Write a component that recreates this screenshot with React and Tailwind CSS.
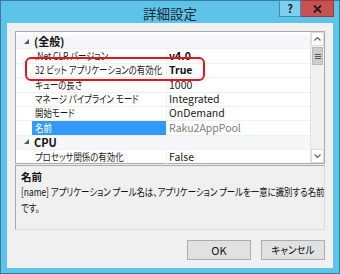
import React from 'react';

const font = { fontFamily: '"Noto Sans CJK JP", "Noto Sans", sans-serif', fontFeatureSettings: '"palt"' };

const rows = [
  { cat: true, name: '(全般)' },
  { name: '.Net CLR バージョン', value: 'v4.0', bold: true },
  { name: '32 ビット アプリケーションの有効化', value: 'True', bold: true },
  { name: 'キューの長さ', value: '1000' },
  { name: 'マネージ パイプライン モード', value: 'Integrated' },
  { name: '開始モード', value: 'OnDemand' },
  { name: '名前', value: 'Raku2AppPool', selected: true, readonly: true },
  { cat: true, name: 'CPU' },
  { name: 'プロセッサ関係の有効化', value: 'False' },
];

const Row = ({ row }) => {
  if (row.cat) {
    return (
      <div className="h-[14.4px] shrink-0 flex items-center bg-[#f5f7fa] border-b border-[#eef0f4]">
        <div className="w-[18px] flex justify-center pl-[4px]">
          <svg width="6" height="6" viewBox="0 0 6 6"><path d="M5 0 L5 5 L0 5 Z" fill="#595959" /></svg>
        </div>
        <span className="text-[11px] font-bold text-[#111] leading-none">{row.name}</span>
      </div>
    );
  }
  return (
    <div className="h-[14.4px] shrink-0 flex items-center border-b border-[#f0f0f0]">
      <div className={`w-[134px] shrink-0 h-full ml-[16px] flex items-center pl-[3px] ${row.selected ? 'bg-[#3399ff] text-white' : 'text-[#1a1a1a]'}`}>
        <span className="text-[10.5px] leading-none whitespace-nowrap scale-x-[0.8] origin-left">{row.name}</span>
      </div>
      <div className="flex-1 h-full flex items-center pl-[2px] border-l border-[#f0f0f0]">
        <span className={`text-[10.5px] leading-none ${row.bold ? 'font-bold text-[#111]' : row.readonly ? 'text-[#7a7a7a]' : 'text-[#1a1a1a]'}`}>{row.value}</span>
      </div>
    </div>
  );
};

export default function App() {
  return (
    <div className="w-[340px] h-[274px] bg-[#5ec3e9] border border-[#3a7c9c] flex flex-col" style={font}>
      {/* title bar */}
      <div className="h-[22px] shrink-0 relative flex items-center justify-center">
        <span className="text-[13.5px] text-[#1b2a33] mt-[2px]">詳細設定</span>
        <div className="absolute top-[-1px] right-[5px] flex">
          <div className="w-[22px] h-[17px] bg-[#7fd0ef] border border-[#3f8fb3] flex items-center justify-center text-[11px] font-bold text-[#1a1a1a]">?</div>
          <div className="w-[33px] h-[17px] bg-[#c75050] border border-[#9e3a3a] border-l-0 flex items-center justify-center">
            <svg width="9" height="8" viewBox="0 0 9 8"><path d="M1 0.5 L8 7.5 M8 0.5 L1 7.5" stroke="#1e1e1e" strokeWidth="1.8" /></svg>
          </div>
        </div>
      </div>

      {/* client */}
      <div className="flex-1 mx-[6px] mb-[5px] bg-[#f0f0f0] px-[8px] pt-[8px] flex flex-col">
        <div className="h-[133px] shrink-0 bg-white border border-[#a9a9a9] flex relative">
          <div className="flex-1 flex flex-col pt-[3px]">
            {rows.map((r, i) => <Row key={i} row={r} />)}
          </div>
          {/* scrollbar */}
          <div className="w-[14px] bg-[#f0f0f0] border-l border-[#e3e3e3] flex flex-col">
            <div className="h-[14px] bg-white border border-[#dcdcdc] flex items-center justify-center">
              <svg width="7" height="4" viewBox="0 0 7 4"><path d="M0.5 3.5 L3.5 0.5 L6.5 3.5" stroke="#606060" fill="none" strokeWidth="1.2" /></svg>
            </div>
            <div className="h-[18px] mx-[1px] mt-[1px] bg-[#cdcdcd] border border-[#b9b9b9] flex flex-col items-center justify-center gap-[1px]">
              <div className="w-[6px] h-[1px] bg-[#555]" />
              <div className="w-[6px] h-[1px] bg-[#555]" />
              <div className="w-[6px] h-[1px] bg-[#555]" />
            </div>
            <div className="flex-1" />
            <div className="h-[14px] bg-white border border-[#dcdcdc] flex items-center justify-center">
              <svg width="7" height="4" viewBox="0 0 7 4"><path d="M0.5 0.5 L3.5 3.5 L6.5 0.5" stroke="#606060" fill="none" strokeWidth="1.2" /></svg>
            </div>
          </div>
          {/* highlight ring */}
          <div className="absolute left-[9px] top-[25px] w-[180px] h-[24px] border-2 border-[#e8141b] rounded-[6px]" />
        </div>

        <div className="h-[65px] shrink-0 mt-[1px] border border-[#a9a9a9] border-r-[#dcdcdc] border-b-[#dcdcdc] px-[5px] pt-[4px] text-[#111]">
          <div className="text-[10.5px] font-bold leading-[13px]">名前</div>
          <div className="text-[10.5px] leading-[16px] mt-[1px] whitespace-nowrap scale-x-[0.8] origin-left">[name] アプリケーション プール名は、アプリケーション プールを一意に識別する名前</div>
          <div className="text-[10.5px] leading-[16px] whitespace-nowrap scale-x-[0.8] origin-left">です。</div>
        </div>

        <div className="flex justify-end gap-[10px] mt-[10px] shrink-0">
          <div className="w-[64px] h-[20px] bg-[#e1e1e1] border border-[#adadad] flex items-center justify-center text-[11px] text-[#111]">OK</div>
          <div className="w-[64px] h-[20px] bg-[#e1e1e1] border border-[#adadad] flex items-center justify-center text-[10.5px] text-[#111]">
            <span className="scale-x-[0.9]">キャンセル</span>
          </div>
        </div>
      </div>
    </div>
  );
}
